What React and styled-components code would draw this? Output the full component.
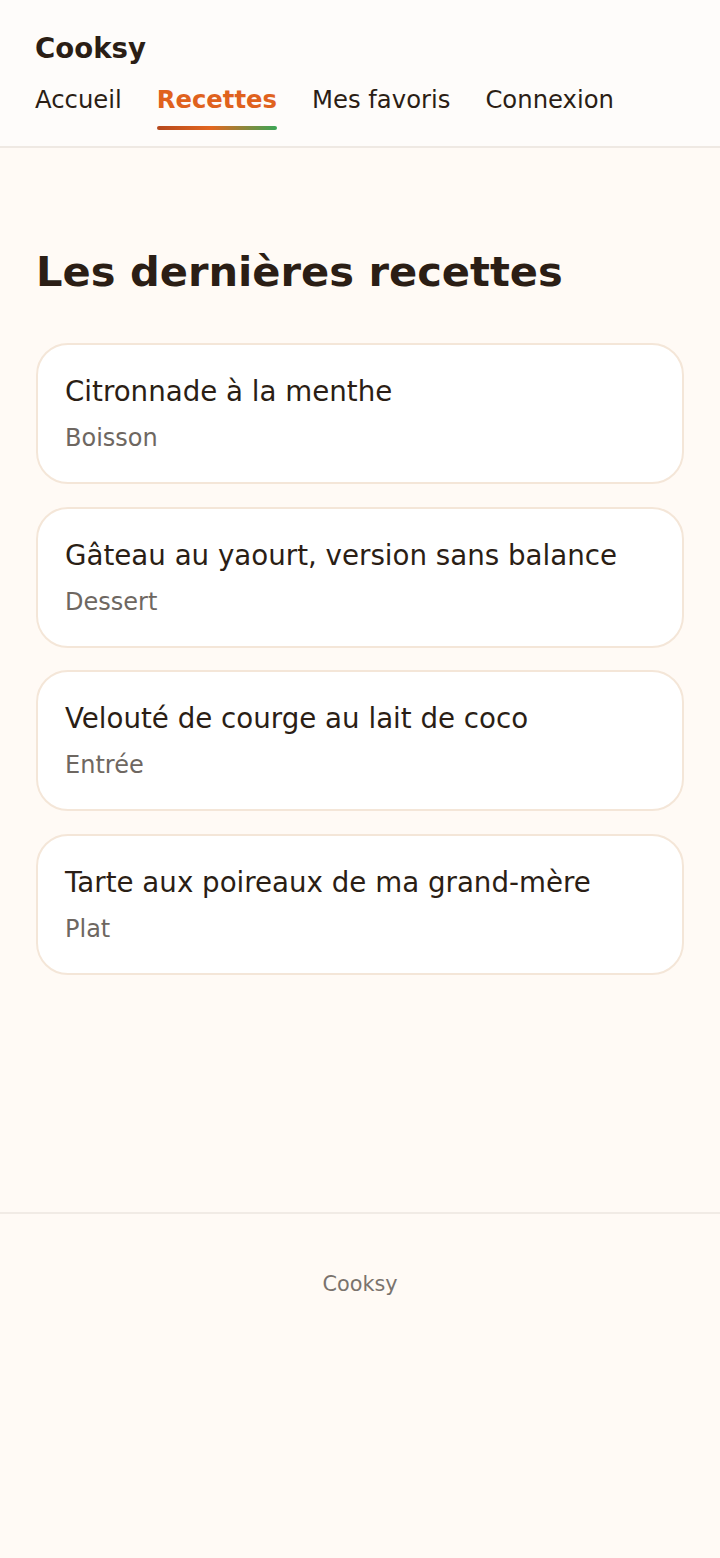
import React from "react";
import styled, { createGlobalStyle } from "styled-components";

const recipes = [
  { title: "Citronnade à la menthe", category: "Boisson" },
  { title: "Gâteau au yaourt, version sans balance", category: "Dessert" },
  { title: "Velouté de courge au lait de coco", category: "Entrée" },
  { title: "Tarte aux poireaux de ma grand-mère", category: "Plat" },
];

const links = ["Accueil", "Recettes", "Mes favoris", "Connexion"];

export default function App() {
  return (
    <>
      <GlobalStyle />
      <Page>
        <Header>
          <Brand>Cooksy</Brand>
          <Nav>
            {links.map((label) => (
              <NavLink key={label} href="#" $active={label === "Recettes"}>
                {label}
              </NavLink>
            ))}
          </Nav>
        </Header>
        <Main>
          <Heading>Les dernières recettes</Heading>
          <List>
            {recipes.map((r) => (
              <Card key={r.title}>
                <CardTitle>{r.title}</CardTitle>
                <CardMeta>{r.category}</CardMeta>
              </Card>
            ))}
          </List>
        </Main>
        <Footer>Cooksy</Footer>
      </Page>
    </>
  );
}

const GlobalStyle = createGlobalStyle`
  * { box-sizing: border-box; }
  html, body {
    margin: 0;
    background: #fffaf5;
    font-family: "DejaVu Sans", "Noto Sans", sans-serif;
    color: #2b1e15;
  }
`;

const Page = styled.div`
  min-height: 1558px;
  display: flex;
  flex-direction: column;
  background: #fffaf5;
`;

const Header = styled.header`
  background: #fefcfa;
  border-bottom: 2px solid #efe9e3;
  padding: 31px 35px 16px;
`;

const Brand = styled.div`
  font-size: 27.6px;
  font-weight: 700;
  line-height: 36px;
`;

const Nav = styled.nav`
  display: flex;
  gap: 35px;
  margin-top: 16px;
`;

const NavLink = styled.a`
  display: flex;
  flex-direction: column;
  font-size: 24.3px;
  line-height: 34px;
  text-decoration: none;
  color: ${(p) => (p.$active ? "#e0621d" : "#2b1e15")};
  font-weight: ${(p) => (p.$active ? 700 : 400)};

  &::after {
    content: "";
    display: block;
    height: 4px;
    margin-top: 9px;
    border-radius: 2px;
    background: ${(p) =>
      p.$active
        ? "linear-gradient(90deg, #b5481c 0%, #e3661f 45%, #3aa655 100%)"
        : "transparent"};
  }
`;

const Main = styled.main`
  height: 1064px;
  padding: 99px 36px 0;
`;

const Heading = styled.h1`
  margin: 0 0 46px;
  font-size: 41.6px;
  line-height: 50px;
  font-weight: 700;
  color: #2b1e15;
`;

const List = styled.div`
  display: flex;
  flex-direction: column;
  gap: 22.5px;
`;

const Card = styled.div`
  background: #ffffff;
  border: 2px solid #f4e6d8;
  border-radius: 32px;
  padding: 27px 27px 27px;
`;

const CardTitle = styled.div`
  font-size: 27.7px;
  line-height: 39px;
  color: #2b1e15;
`;

const CardMeta = styled.div`
  margin-top: 10px;
  font-size: 24px;
  line-height: 34px;
  color: #6e6761;
`;

const Footer = styled.footer`
  border-top: 2px solid #f1ebe5;
  padding-top: 56px;
  text-align: center;
  font-size: 20.8px;
  line-height: 28px;
  color: #7a736d;
`;
